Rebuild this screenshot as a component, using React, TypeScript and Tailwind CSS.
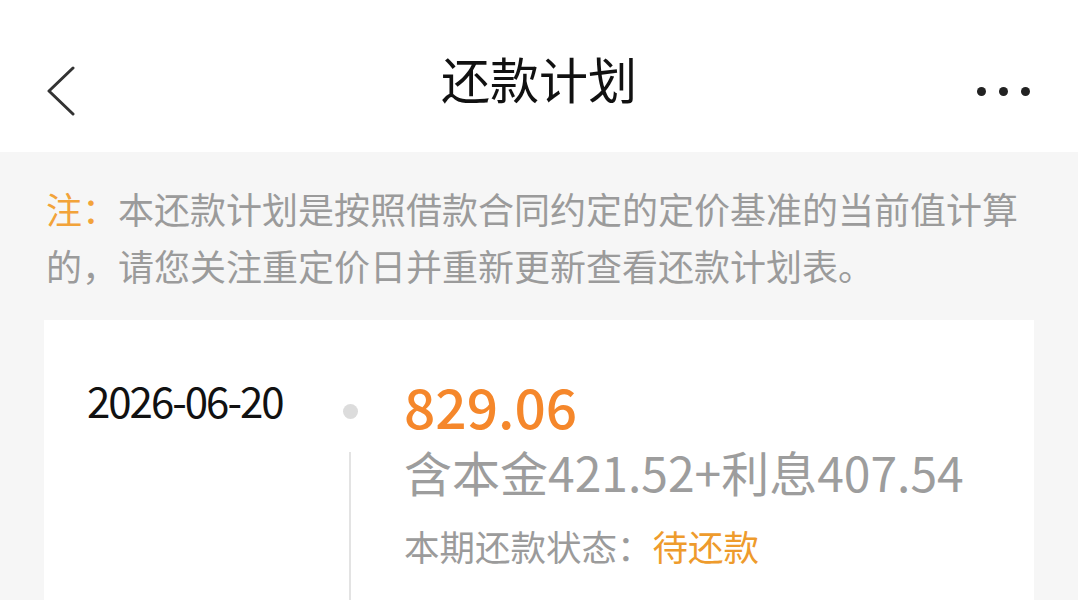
import React from "react";

const FONT = '"Noto Sans CJK SC", "Noto Sans", sans-serif';

function BackIcon() {
  return (
    <svg width="30" height="50" viewBox="0 0 30 50" fill="none">
      <path d="M27 2 L3 25 L27 48" stroke="#333333" strokeWidth="3" strokeLinecap="round" strokeLinejoin="round" />
    </svg>
  );
}

function MoreIcon() {
  return (
    <div className="flex items-center gap-[13px]">
      <span className="block w-[9px] h-[9px] rounded-full bg-[#222222]" />
      <span className="block w-[9px] h-[9px] rounded-full bg-[#222222]" />
      <span className="block w-[9px] h-[9px] rounded-full bg-[#222222]" />
    </div>
  );
}

export default function App() {
  return (
    <div className="w-full h-[600px] overflow-hidden bg-[#f6f6f6]" style={{ fontFamily: FONT }}>
      {/* Top navigation bar */}
      <header className="relative h-[152px] bg-white flex items-center justify-center">
        <div className="absolute left-[46px] top-[66px]">
          <BackIcon />
        </div>
        <h1 className="text-[49px] leading-none text-[#111111] font-normal mt-[2px]">还款计划</h1>
        <div className="absolute right-[48px] top-[87px]">
          <MoreIcon />
        </div>
      </header>

      {/* Notice */}
      <p className="pl-[46px] pr-[20px] pt-[28px] text-[36px] leading-[57px] text-[#9b9b9b]">
        <span className="text-[#f2a33a]">注：</span>本还款计划是按照借款合同约定的定价基准的当前值计算
        <br />
        的，请您关注重定价日并重新更新查看还款计划表。
      </p>

      {/* Repayment card */}
      <section className="mx-[44px] mt-[26px] bg-white h-[320px] flex pl-[43px]">
        <div className="w-[250px] pt-[56px]">
          <div className="text-[42px] leading-[48px] text-[#111111] tracking-[-2px]">2026-06-20</div>
        </div>

        <div className="w-[26px] flex flex-col items-center pt-[84px]">
          <span className="block w-[15px] h-[15px] rounded-full bg-[#dcdcdc]" />
          <span className="block w-[2px] flex-1 mt-[33px] bg-[#e3e3e3]" />
        </div>

        <div className="ml-[41px] pt-[58px] flex flex-col">
          <div className="text-[55px] leading-[55px] text-[#f5872b] font-medium">829.06</div>
          <div className="mt-[14px] text-[48px] leading-[48px] text-[#9d9d9d]">含本金421.52+利息407.54</div>
          <div className="mt-[33px] text-[35.5px] leading-[36px] text-[#9b9b9b]">
            本期还款状态：<span className="text-[#ee9b2c]">待还款</span>
          </div>
        </div>
      </section>
    </div>
  );
}
